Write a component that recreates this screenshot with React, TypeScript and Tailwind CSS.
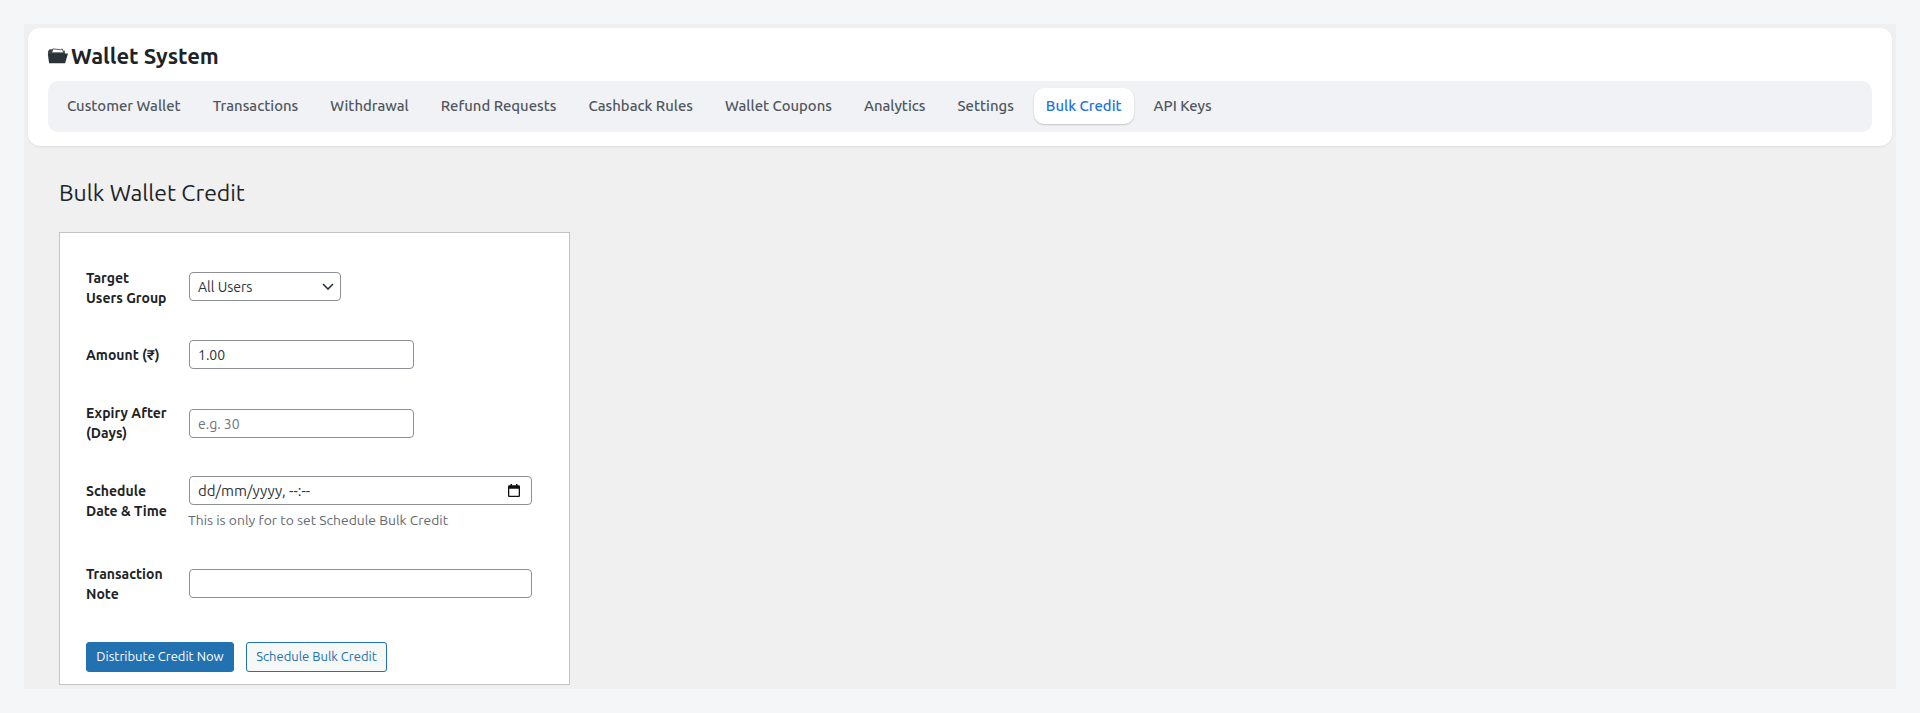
const tabs = [
  "Customer Wallet",
  "Transactions",
  "Withdrawal",
  "Refund Requests",
  "Cashback Rules",
  "Wallet Coupons",
  "Analytics",
  "Settings",
  "Bulk Credit",
  "API Keys",
];

const inputClass =
  "h-[29px] rounded-[4px] border border-[#8c8f94] bg-white px-2 text-[14px] text-[#2c3338] outline-none placeholder:text-[#6f7479]";

function FolderIcon() {
  return (
    <svg width="21" height="16" viewBox="0 0 20 15" className="-ml-[1px] shrink-0">
      <path d="M1 3 L2.5 1 H6 L7.5 2.5 H17 V6 H1 Z" fill="#3c4145" />
      <path d="M4.5 4.5 L5.5 0.7 L13 1.5 L14.5 0.8 L16 4.5 Z" fill="#fff" stroke="#3c4145" strokeWidth="0.8" />
      <path d="M4 5 H20 L17.2 14.5 H2 L0.8 5.5 Z" fill="#2c3338" />
    </svg>
  );
}

function CalendarIcon() {
  return (
    <svg width="12" height="13" viewBox="0 0 12 13" className="block">
      <path
        d="M2.5 0 V1.3 H1.3 C0.6 1.3 0 1.9 0 2.6 V11.7 C0 12.4 0.6 13 1.3 13 H10.7 C11.4 13 12 12.4 12 11.7 V2.6 C12 1.9 11.4 1.3 10.7 1.3 H9.5 V0 H8 V1.3 H4 V0 Z M1.3 4.8 H10.7 V11.7 H1.3 Z"
        fill="#111"
        fillRule="evenodd"
      />
    </svg>
  );
}

function Row({
  label,
  className,
  labelClass,
  children,
}: {
  label: React.ReactNode;
  className: string;
  labelClass: string;
  children: React.ReactNode;
}) {
  return (
    <div className={`flex ${className}`}>
      <label className={`w-[103px] shrink-0 text-[14px] font-bold leading-[19.6px] text-[#1d2327] ${labelClass}`}>
        {label}
      </label>
      <div>{children}</div>
    </div>
  );
}

export default function App() {
  return (
    <div className="h-[713px] overflow-hidden bg-[#f5f6f8] px-6 pt-6 font-['Ubuntu','Noto_Sans',sans-serif]">
      <div className="h-[665px] overflow-hidden bg-[#f0f0f1] px-1 pt-1">
        {/* Header card */}
        <div className="h-[118px] rounded-xl bg-white px-5 pt-4 shadow-[0_1px_2px_rgba(0,0,0,0.08)]">
          <h1 className="flex h-[24px] items-center gap-[3px] text-[22px] font-bold leading-none text-[#1d2327]">
            <FolderIcon />
            Wallet System
          </h1>
          <nav className="mt-[13px] flex h-[51px] items-center gap-2 rounded-[10px] bg-[#f0f2f5] pb-[1px] pl-[7px]">
            {tabs.map((tab) => (
              <span
                key={tab}
                className={
                  tab === "Bulk Credit"
                    ? "flex h-[36px] items-center rounded-[10px] bg-white px-3 text-[14.85px] font-medium text-[#2271e0] shadow-[0_1px_2px_rgba(0,0,0,0.2)]"
                    : "flex h-[36px] items-center px-3 text-[14.85px] font-medium text-[#50575e]"
                }
              >
                {tab}
              </span>
            ))}
          </nav>
        </div>

        {/* Page content */}
        <div className="pl-[31px]">
          <h2 className="mt-[32px] text-[23px] leading-[29px] text-[#1d2327]">
            Bulk Wallet Credit
          </h2>
          <div className="mt-[25px] h-[453px] w-[511px] border border-[#c3c4c7] bg-white pl-[26px] pt-[39px]">
            <Row label={<>Target<br />Users Group</>} className="h-[68px]" labelClass="-mt-[3px]">
              <div className="relative w-[152px]">
                <select className={`${inputClass} w-full appearance-none pt-[1px]`}>
                  <option>All Users</option>
                </select>
                <svg
                  width="12"
                  height="7"
                  viewBox="0 0 12 7"
                  className="pointer-events-none absolute right-[7px] top-[11px]"
                >
                  <path d="M1 1 L6 6 L11 1" fill="none" stroke="#2c3338" strokeWidth="1.6" />
                </svg>
              </div>
            </Row>
            <Row label="Amount (₹)" className="h-[69px]" labelClass="mt-[6px]">
              <input className={`${inputClass} w-[225px]`} defaultValue="1.00" />
            </Row>
            <Row label={<>Expiry After<br />(Days)</>} className="h-[67px]" labelClass="-mt-[5px]">
              <input className={`${inputClass} w-[225px]`} placeholder="e.g. 30" />
            </Row>
            <Row label={<>Schedule<br />Date &amp; Time</>} className="h-[93px]" labelClass="mt-[6px]">
              <div className="relative w-[343px]">
                <input className={`${inputClass} w-full text-[15px]`} defaultValue="dd/mm/yyyy, --:--" />
                <div className="pointer-events-none absolute right-[12px] top-[8px]">
                  <CalendarIcon />
                </div>
              </div>
              <p className="-ml-[1px] mt-[5px] text-[13.9px] leading-[20px] text-[#646970]">
                This is only for to set Schedule Bulk Credit
              </p>
            </Row>
            <Row label={<>Transaction<br />Note</>} className="h-[73px]" labelClass="-mt-[4px]">
              <input className={`${inputClass} w-[343px]`} />
            </Row>
            <div className="flex gap-3">
              <button className="h-[30px] w-[148px] rounded-[3px] border border-[#2271b1] bg-[#2271b1] text-[13px] text-white">
                Distribute Credit Now
              </button>
              <button className="h-[30px] w-[141px] rounded-[3px] border border-[#2271b1] bg-[#f6f7f7] text-[13px] text-[#2271b1]">
                Schedule Bulk Credit
              </button>
            </div>
          </div>
        </div>
      </div>
    </div>
  );
}
